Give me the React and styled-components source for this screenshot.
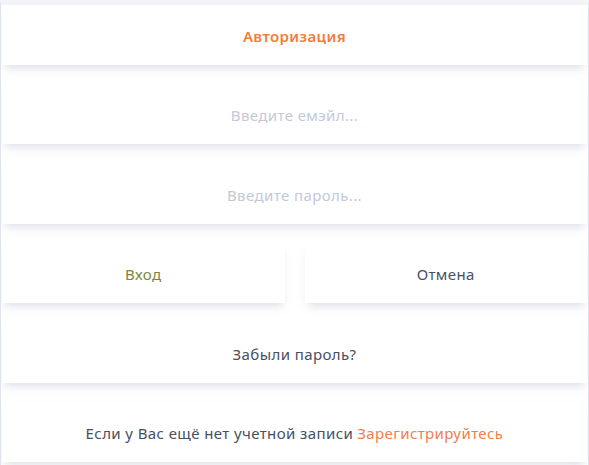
import React from 'react';
import styled, { createGlobalStyle } from 'styled-components';

const GlobalStyle = createGlobalStyle`
    html, body {
        margin: 0;
        padding: 0;
        background: #ffffff;
    }
    body {
        font-family: "Noto Sans", "Open Sans", sans-serif;
    }
`;

const Frame = styled.div`
    width: 589px;
    height: 465px;
    box-sizing: border-box;
    border-left: 1px solid #dfe4ec;
    border-right: 1px solid #dfe4ec;
    border-top: 5px solid #f3f4f7;
    padding: 0 1px;
    background: #fff;
    display: flex;
    flex-direction: column;
    gap: 19.4px;
    overflow: hidden;
`;

const Card = styled.div`
    height: 60px;
    box-sizing: border-box;
    padding-top: 2px;
    flex-shrink: 0;
    background: #fff;
    display: flex;
    align-items: center;
    justify-content: center;
    box-shadow: 0 6px 9px -3px rgba(175, 185, 200, 0.45);
    font-size: 15px;
    letter-spacing: 0.4px;
    color: ${p => p.$color || '#465062'};
    font-weight: ${p => p.$bold ? 600 : 400};
`;

const Title = styled(Card)`
    font-size: 15px;
    letter-spacing: 0.4px;
    color: #f27d3b;
`;

const Input = styled.input`
    width: 100%;
    height: 100%;
    border: none;
    outline: none;
    background: transparent;
    text-align: center;
    font-family: inherit;
    font-size: 15px;
    letter-spacing: 0.4px;
    color: #465062;
    &::placeholder {
        color: #c3c9d6;
    }
`;

const Row = styled.div`
    display: grid;
    grid-template-columns: 1fr 1fr;
    gap: 20px;
`;

const Link = styled.span`
    color: #f27d4e;
    margin-left: 4px;
`;

const App = () => {
    return (
        <>
            <GlobalStyle />
            <Frame>
                <Title $bold>Авторизация</Title>
                <Card><Input placeholder="Введите емэйл..." /></Card>
                <Card><Input type="password" placeholder="Введите пароль..." /></Card>
                <Row>
                    <Card $color="#74893f">Вход</Card>
                    <Card>Отмена</Card>
                </Row>
                <Card>Забыли пароль?</Card>
                <Card>
                    Если у Вас ещё нет учетной записи
                    <Link>Зарегистрируйтесь</Link>
                </Card>
            </Frame>
        </>
    );
};

export default App;
